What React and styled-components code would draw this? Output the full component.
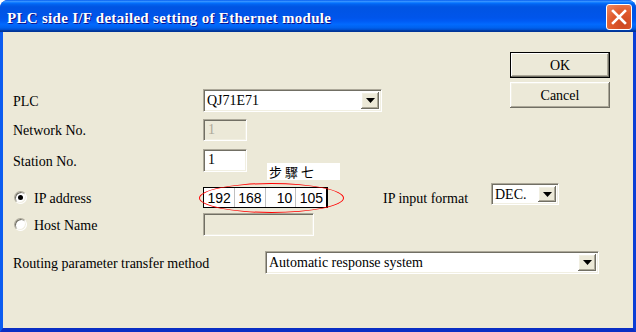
import React from 'react'
import styled, { createGlobalStyle, css } from 'styled-components'

const GlobalStyle = createGlobalStyle`
html, body {
  margin: 0;
  padding: 0;
  width: 636px;
  height: 332px;
  overflow: hidden;
  background: #fff;
}
* { box-sizing: border-box; }
`

const sunken = css`
border-style: solid;
border-width: 1px;
border-color: #aca899 #fff #fff #aca899;
box-shadow: inset 1px 1px 0 #716f64, inset -1px -1px 0 #f1efe2;
`

const raised = css`
border: none;
box-shadow: inset -1px -1px 0 #716f64, inset 1px 1px 0 #fff, inset -2px -2px 0 #aca899, inset 2px 2px 0 #f1efe2;
`

const App = () => {
  return (
    <>
      <GlobalStyle />
      <Window>
        <TitleBar>
          <Title>PLC side I/F detailed setting of Ethernet module</Title>
          <CloseButton>
            <svg width="16" height="16" viewBox="0 0 16 16">
              <path d="M2 2 L14 14 M14 2 L2 14" stroke="#fff" strokeWidth="2.6" strokeLinecap="square" />
            </svg>
          </CloseButton>
        </TitleBar>
        <Body>
          <Top>
            <Form>
              <Row $h={23}>
                <Label>PLC</Label>
                <Combo $w={179} value="QJ71E71" />
              </Row>
              <Row $h={22} $top={7}>
                <Label>Network No.</Label>
                <TextBox $w={44} disabled>1</TextBox>
              </Row>
              <Row $h={23} $top={8}>
                <Label>Station No.</Label>
                <TextBox $w={44}>1</TextBox>
              </Row>
              <Row $h={21} $top={15}>
                <RadioLabel>
                  <Radio $checked />
                  <span>IP address</span>
                </RadioLabel>
                <IPField>
                  <IPBox>
                    <IPPart $w={31}>192</IPPart>
                    <IPPart $w={31}>168</IPPart>
                    <IPPart $w={31}>10</IPPart>
                    <IPPart $w={30} $last>105</IPPart>
                  </IPBox>
                  <StepTag>步驟七</StepTag>
                  <Ellipse />
                </IPField>
                <FormatLabel>IP input format</FormatLabel>
                <Combo $w={68} $h={22} $lift value="DEC." />
              </Row>
              <Row $h={23} $top={5}>
                <RadioLabel>
                  <Radio />
                  <span>Host Name</span>
                </RadioLabel>
                <TextBox $w={111} disabled />
              </Row>
            </Form>
            <ButtonColumn>
              <PushButton $default>OK</PushButton>
              <PushButton>Cancel</PushButton>
            </ButtonColumn>
          </Top>
          <Row $h={23} $top={15}>
            <Label $w={252}>Routing parameter transfer method</Label>
            <Combo $w={334} value="Automatic response system" />
          </Row>
        </Body>
      </Window>
    </>
  )
}

const Combo = ({ $w, $h, $lift, value }) => (
  <ComboBox $w={$w} $h={$h} $lift={$lift}>
    <ComboText>{value}</ComboText>
    <DropButton>
      <svg width="9" height="5" viewBox="0 0 9 5">
        <path d="M0 0 H9 L4.5 5 Z" fill="#000" />
      </svg>
    </DropButton>
  </ComboBox>
)

export default App

const Window = styled.div`
width: 636px;
height: 332px;
display: flex;
flex-direction: column;
background: #0a3fd8;
border-radius: 8px 8px 0 0;
overflow: hidden;
font-family: "Liberation Serif", "Times New Roman", serif;
`
const TitleBar = styled.div`
height: 32px;
flex-shrink: 0;
display: flex;
align-items: center;
justify-content: space-between;
padding: 2px 4px 0 7px;
background: linear-gradient(180deg, #0058ee 0%, #3a93ff 4%, #288eff 6%, #127dff 8%, #036ffc 10%, #0262ee 14%, #0057e5 20%, #0054e3 24%, #0055eb 56%, #005bf5 66%, #026afe 76%, #0062ef 86%, #0052d6 92%, #0040ab 94%, #003092 100%);
`
const Title = styled.div`
color: #fff;
font-weight: bold;
font-size: 15px;
letter-spacing: 0.3px;
padding-top: 3px;
text-shadow: 1px 1px 0 #0f1089;
`
const CloseButton = styled.div`
width: 26px;
height: 26px;
border: 1px solid #fff;
border-radius: 3px;
background: radial-gradient(circle at 70% 80%, #cc4620 0%, #e05a2c 50%, #f08b63 100%);
display: flex;
align-items: center;
justify-content: center;
`
const Body = styled.div`
flex: 1;
display: flex;
flex-direction: column;
background: #ece9d8;
border-left: 3px solid #0c5cf0;
border-right: 3px solid #0a3ed6;
border-bottom: 4px solid #0a2ec4;
padding: 20px 23px 0 10px;
font-size: 14px;
color: #000;
`
const Top = styled.div`
display: grid;
grid-template-columns: minmax(0, 1fr) 100px;
align-items: start;
`
const Form = styled.div`
grid-column: 1 / 3;
grid-row: 1;
display: flex;
flex-direction: column;
margin-top: 37px;
`
const ButtonColumn = styled.div`
grid-column: 2;
grid-row: 1;
display: flex;
flex-direction: column;
gap: 4px;
`
const PushButton = styled.div`
width: 100px;
height: 26px;
display: flex;
align-items: center;
justify-content: center;
padding-top: 1px;
background: #ece9d8;
${raised}
${p => p.$default && css`
  outline: 1px solid #000;
  outline-offset: -1px;
  box-shadow: inset -2px -2px 0 #716f64, inset 2px 2px 0 #fff, inset -3px -3px 0 #aca899;
`}
`
const Row = styled.div`
display: flex;
align-items: center;
height: ${p => p.$h}px;
margin-top: ${p => p.$top || 0}px;
`
const Label = styled.div`
width: ${p => p.$w || 190}px;
flex-shrink: 0;
padding-top: 2px;
`
const RadioLabel = styled.div`
width: 190px;
flex-shrink: 0;
display: flex;
align-items: center;
gap: 7px;
padding-left: 1px;
& > span:last-child {
  padding-top: 2px;
}
`
const Radio = styled.span`
width: 13px;
height: 13px;
border-radius: 50%;
background: #fff;
position: relative;
border-style: solid;
border-width: 1px;
border-color: #aca899 #fff #fff #aca899;
box-shadow: inset 1px 1px 0 #716f64, inset -1px -1px 0 #f1efe2;
${p => p.$checked && css`
  &::after {
    content: '';
    position: absolute;
    left: 3px;
    top: 3px;
    width: 5px;
    height: 5px;
    border-radius: 50%;
    background: #000;
  }
`}
`
const TextBox = styled.div`
width: ${p => p.$w}px;
height: 100%;
${sunken}
background: ${p => (p.disabled ? '#ece9d8' : '#fff')};
color: ${p => (p.disabled ? '#aca899' : '#000')};
padding: 1px 4px;
line-height: 18px;
`
const ComboBox = styled.div`
width: ${p => p.$w}px;
height: ${p => (p.$h ? `${p.$h}px` : '100%')};
${sunken}
background: #fff;
display: flex;
padding: 2px;
flex-shrink: 0;
${p => p.$lift && css`margin-bottom: 7px;`}
`
const ComboText = styled.div`
flex: 1;
padding-left: 1px;
line-height: 18px;
white-space: nowrap;
overflow: hidden;
`
const DropButton = styled.div`
width: 18px;
display: flex;
align-items: center;
justify-content: center;
background: #ece9d8;
${raised}
`
const IPField = styled.div`
position: relative;
height: 100%;
`
const IPBox = styled.div`
width: 125px;
height: 100%;
border: 1px solid #000;
border-right-width: 2px;
background: #fff;
display: flex;
font-family: "Liberation Sans", Arial, sans-serif;
font-size: 14px;
`
const IPPart = styled.div`
width: ${p => p.$w}px;
text-align: right;
padding-right: 3px;
line-height: 20px;
border-right: ${p => (p.$last ? 'none' : '1px solid #c0c0c0')};
`
const StepTag = styled.div`
position: absolute;
left: 64px;
top: -24px;
width: 73px;
height: 17px;
background: #fff;
font-family: "Noto Sans CJK TC", sans-serif;
font-size: 13px;
line-height: 17px;
letter-spacing: 3px;
padding-left: 2px;
`
const Ellipse = styled.div`
position: absolute;
left: -4px;
top: -4px;
width: 145px;
height: 30px;
border: 1px solid #f00;
border-radius: 50%;
pointer-events: none;
`
const FormatLabel = styled.div`
width: 108px;
margin-left: 55px;
flex-shrink: 0;
padding-top: 2px;
`
